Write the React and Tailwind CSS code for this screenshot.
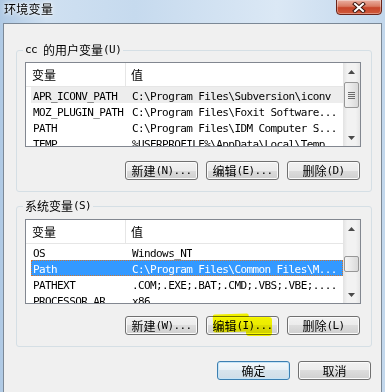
import React from "react";

const mono = "font-['DejaVu_Sans_Mono','Liberation_Mono',monospace] text-[11px] tracking-[-0.6px]";
const cjk = "font-['Noto_Sans_CJK_SC','Noto_Sans',sans-serif] text-[12px]";

// SimSun-style mixed text: half-width ascii, full-width CJK
function Txt({ children }) {
  const parts = String(children).split(/([\x00-\x7F]+)/).filter(Boolean);
  return parts.map((p, i) =>
    /^[\x00-\x7F]+$/.test(p) ? (
      <span key={i} className={`${mono} whitespace-pre`}>
        {p}
      </span>
    ) : (
      <span key={i} className={cjk}>
        {p}
      </span>
    )
  );
}

function Button({ children, primary }) {
  return (
    <div
      className={
        "h-[19px] w-[73px] rounded-[3px] border flex items-center justify-center leading-[14px] text-black " +
        (primary
          ? "border-[#3c7fb1] bg-[linear-gradient(to_bottom,#f3f8fb_0%,#e6eff5_50%,#d7e4ed_50%,#cfdde8_100%)] shadow-[inset_0_0_0_1px_#c5e4f7]"
          : "border-[#707070] bg-[linear-gradient(to_bottom,#f2f2f2_0%,#ebebeb_50%,#dddddd_50%,#cfcfcf_100%)] shadow-[inset_0_0_0_1px_#fbfbfb]")
      }
    >
      <Txt>{children}</Txt>
    </div>
  );
}

function Arrow({ up }) {
  return (
    <div className="h-[17px] flex items-center justify-center">
      <svg width="7" height="4" viewBox="0 0 7 4">
        <path d={up ? "M0 4 L3.5 0 L7 4 Z" : "M0 0 L3.5 4 L7 0 Z"} fill="#4a4a4a" />
      </svg>
    </div>
  );
}

function Scrollbar({ thumbTop, thumbH, grip }) {
  return (
    <div className="w-[17px] shrink-0 flex flex-col bg-[linear-gradient(to_right,#e2e2e2,#f2f2f2_25%,#f2f2f2_75%,#e6e6e6)]">
      <Arrow up />
      <div style={{ marginTop: thumbTop, height: thumbH }} className="mx-[1px] rounded-[2px] border border-[#979797] bg-[linear-gradient(to_right,#f4f4f4,#e8e8e8_50%,#d9d9d9)] flex flex-col items-center justify-center gap-[1px]">
        {grip && (
          <>
            <div className="w-[7px] h-[1px] bg-[#6b6b6b]" />
            <div className="w-[7px] h-[1px] bg-[#6b6b6b]" />
            <div className="w-[7px] h-[1px] bg-[#6b6b6b]" />
            <div className="w-[7px] h-[1px] bg-[#6b6b6b]" />
          </>
        )}
      </div>
      <div className="flex-1" />
      <Arrow />
    </div>
  );
}

function VarList({ rows, hover, selected, thumbTop, thumbH, grip }) {
  return (
    <div className="ml-[8px] w-[336px] h-[85px] border border-[#828790] bg-white flex overflow-hidden">
      <div className="flex-1 flex flex-col overflow-hidden">
        <div className="h-[24px] shrink-0 flex border-b border-[#e6e6e6]">
          <div className="w-[100px] pl-[6px] border-r border-[#e6e6e6] flex items-center leading-[14px]">
            <Txt>变量</Txt>
          </div>
          <div className="pl-[5px] flex items-center leading-[14px]">
            <Txt>值</Txt>
          </div>
        </div>
        {rows.map(([name, value], i) => {
          const sel = i === selected;
          const hov = i === hover;
          return (
            <div
              key={name}
              className={
                "ml-[5px] h-[16px] shrink-0 flex items-center leading-[16px] whitespace-nowrap border " +
                (sel
                  ? "bg-[#3399ff] text-white border-dotted border-[#d0752f]"
                  : hov
                  ? "bg-[#ededed] text-black border-transparent"
                  : "text-black border-transparent")
              }
            >
              <div className="w-[94px] pl-[1px] shrink-0 overflow-hidden">
                <Txt>{name}</Txt>
              </div>
              <div className="pl-[6px] overflow-hidden">
                <Txt>{value}</Txt>
              </div>
            </div>
          );
        })}
      </div>
      <Scrollbar thumbTop={thumbTop} thumbH={thumbH} grip={grip} />
    </div>
  );
}

function Group({ label, children, className }) {
  return (
    <fieldset className={"ml-[12px] w-[356px] border border-[#d5dfe5] rounded-[3px] " + className}>
      <legend className="ml-[6px] px-[2px] h-[14px] flex items-center leading-[14px] text-black">
        <Txt>{label}</Txt>
      </legend>
      {children}
    </fieldset>
  );
}

const userVars = [
  ["APR_ICONV_PATH", "C:\\Program Files\\Subversion\\iconv"],
  ["MOZ_PLUGIN_PATH", "C:\\Program Files\\Foxit Software..."],
  ["PATH", "C:\\Program Files\\IDM Computer S..."],
  ["TEMP", "%USERPROFILE%\\AppData\\Local\\Temp"],
];

const sysVars = [
  ["OS", "Windows_NT"],
  ["Path", "C:\\Program Files\\Common Files\\M..."],
  ["PATHEXT", ".COM;.EXE;.BAT;.CMD;.VBS;.VBE;...."],
  ["PROCESSOR_AR", "x86"],
];

export default function App() {
  return (
    <div className="w-[385px] h-[392px] overflow-hidden flex flex-col bg-[linear-gradient(to_right,#afc9e4,#cfe0f1_12%,#c6daee_35%,#dbe8f5_72%,#c2d7ec)]">
      <div className="h-[23px] shrink-0 flex items-start justify-between">
        <div className="pl-[4px] pt-[2px] leading-[14px] text-black font-['Noto_Sans_CJK_SC',sans-serif] text-[12px] tracking-[0.3px] [text-shadow:0_0_6px_#ffffff,0_0_3px_#ffffff]">
          环境变量
        </div>
        <div className="mr-[3px] w-[46px] h-[16px] -mt-[1px] rounded-b-[4px] border border-[#6a2419] bg-[linear-gradient(to_bottom,#eab0a2_0%,#d97a62_45%,#c7452a_55%,#d0593a_100%)] shadow-[inset_0_0_0_1px_rgba(255,255,255,0.35)] flex items-center justify-center">
          <svg width="14" height="11" viewBox="0 0 14 11">
            <path d="M3 2 L11 9 M11 2 L3 9" stroke="#3d1710" strokeWidth="4" strokeLinecap="square" />
            <path d="M3 2 L11 9 M11 2 L3 9" stroke="#ffffff" strokeWidth="2" strokeLinecap="square" />
          </svg>
        </div>
      </div>
      <div className="mx-[3px] h-[400px] shrink-0 border border-[#7b8896] bg-[#f0f0f0] pt-[19px]">
        <Group label="cc 的用户变量(U)" className="pb-[11px]">
          <div className="mt-[5px]">
            <VarList rows={userVars} hover={0} thumbTop={2} thumbH={26} grip />
          </div>
          <div className="mt-[14px] pr-[11px] flex justify-end gap-[8px]">
            <Button>新建(N)...</Button>
            <Button>编辑(E)...</Button>
            <Button>删除(D)</Button>
          </div>
        </Group>
        <Group label="系统变量(S)" className="mt-[7px] pb-[11px]">
          <div className="mt-[6px]">
            <VarList rows={sysVars} selected={1} thumbTop={19} thumbH={16} />
          </div>
          <div className="mt-[12px] pr-[11px] flex justify-end gap-[8px]">
            <Button>新建(W)...</Button>
            <div className="relative">
              <Button>编辑(I)...</Button>
              <div className="absolute left-[7px] top-[-2px] w-[36px] h-[18px] bg-[#ffff00] mix-blend-multiply rounded-[2px] -rotate-2" />
              <div className="absolute left-[40px] top-[1px] w-[26px] h-[19px] bg-[#ffff00] mix-blend-multiply rounded-[3px]" />
            </div>
            <Button>删除(L)</Button>
          </div>
        </Group>
        <div className="mt-[14px] pr-[10px] flex justify-end gap-[8px]">
          <Button primary>确定</Button>
          <Button>取消</Button>
        </div>
      </div>
    </div>
  );
}
